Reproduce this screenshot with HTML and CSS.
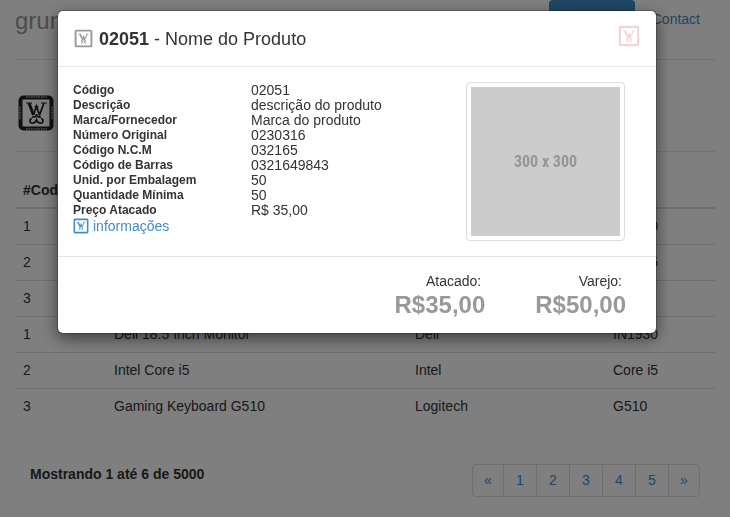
FILE: index.html
```html
<!DOCTYPE html>
<html lang="pt-BR">
<head>
<meta charset="utf-8">
<meta name="viewport" content="width=device-width, initial-scale=1">
<title>Nome do Produto</title>
<link rel="stylesheet" href="styles.css">
</head>
<body>
<svg class="sprite" aria-hidden="true">
  <symbol id="mark" viewBox="0 0 24 24">
    <rect x="2" y="2" width="20" height="20" rx="1" fill="none" stroke="currentColor" stroke-width="2.400"/>
    <path d="M5.500 6.500h3.500M15 6.500h3.500" fill="none" stroke="currentColor" stroke-width="1"/>
    <path d="M7.500 6.500l3.500 7" fill="none" stroke="currentColor" stroke-width="2.200"/>
    <path d="M11 13.500l1.200-5 1.300 5 3.200-7M12 13l-2.500 2 1.500 1.500-2 2M12 13l2.500 2-1.500 1.500 2 2" fill="none" stroke="currentColor" stroke-width="1.300"/>
  </symbol>
</svg>
<div class="page">
  <header class="top">
    <h3 class="brand">grunt-produtos</h3>
    <nav class="pills">
      <a href="#">Home</a>
      <a class="active" href="#">Produtos</a>
      <a href="#">Contact</a>
    </nav>
  </header>
  <div class="banner">
    <svg class="logo" viewBox="0 0 36 36" role="img" aria-label="Logo">
      <rect x="2.500" y="2.500" width="31" height="31" rx="3" fill="none" stroke="#222" stroke-width="4"/>
      <path d="M8 2h21M8 34h21M2 12v13M34 12v13" stroke="#fff" stroke-opacity=".55" stroke-width="1.600" stroke-dasharray="1.700 .8"/>
      <g fill="none" stroke="#222">
        <path d="M8 8h6M23 8h6M16.500 11.500h4" stroke-width="1.200"/>
        <path d="M11 8l4.500 12" stroke-width="3"/>
        <path d="M15.500 20l3-9 3 9 4.500-12" stroke-width="1.800"/>
        <path d="M18.500 19c0 2.500-1.500 3.500-4.500 3M18.500 19c0 2.500 1.500 3.500 4.500 3M14 23.500c-3 .5-2.500 5.500 1 4.500 2-.3 3-1.200 3.500-3 .5 1.800 1.500 2.700 3.500 3 3.500 1 4-4 1-4.500" stroke-width="1.700"/>
      </g>
    </svg>
  </div>
  <table class="products">
    <thead><tr><th class="c-code">#Codigo</th><th class="c-name">Produto</th><th class="c-brand">Marca</th><th>Ref.</th></tr></thead>
    <tbody>
      <tr><td>1</td><td>Dell 18.5 Inch Monitor</td><td>Dell</td><td>IN1930</td></tr>
      <tr><td>2</td><td>Intel Core i5</td><td>Intel</td><td>Core i5</td></tr>
      <tr><td>3</td><td>Gaming Keyboard G510</td><td>Logitech</td><td>G510</td></tr>
      <tr><td>1</td><td>Dell 18.5 Inch Monitor</td><td>Dell</td><td>IN1930</td></tr>
      <tr><td>2</td><td>Intel Core i5</td><td>Intel</td><td>Core i5</td></tr>
      <tr><td>3</td><td>Gaming Keyboard G510</td><td>Logitech</td><td>G510</td></tr>
    </tbody>
  </table>
  <div class="summary">
    <strong>Mostrando 1 até 6 de 5000</strong>
    <nav class="pagination" aria-label="Páginas">
      <a href="#">«</a><a href="#">1</a><a href="#">2</a><a href="#">3</a><a href="#">4</a><a href="#">5</a><a href="#">»</a>
    </nav>
  </div>
</div>

<div class="backdrop">
  <section class="modal" role="dialog" aria-labelledby="modal-title">
    <header class="modal-header">
      <svg class="title-icon" aria-hidden="true"><use href="#mark"/></svg>
      <h4 id="modal-title"><strong>02051</strong> - Nome do Produto</h4>
      <button class="close" type="button" aria-label="Fechar"><svg aria-hidden="true"><use href="#mark"/></svg></button>
    </header>
    <div class="modal-body">
      <div class="details">
        <dl>
          <dt>Código</dt><dd>02051</dd>
          <dt>Descrição</dt><dd>descrição do produto</dd>
          <dt>Marca/Fornecedor</dt><dd>Marca do produto</dd>
          <dt>Número Original</dt><dd>0230316</dd>
          <dt>Código N.C.M</dt><dd>032165</dd>
          <dt>Código de Barras</dt><dd>0321649843</dd>
          <dt>Unid. por Embalagem</dt><dd>50</dd>
          <dt>Quantidade Mínima</dt><dd>50</dd>
          <dt>Preço Atacado</dt><dd>R$ 35,00</dd>
        </dl>
        <a class="info" href="#"><svg aria-hidden="true"><use href="#mark"/></svg>informações</a>
      </div>
      <div class="thumbnail"><div class="placeholder">300 x 300</div></div>
    </div>
    <footer class="modal-footer">
      <div class="price"><span>Atacado:</span><strong>R$35,00</strong></div>
      <div class="price"><span>Varejo:</span><strong>R$50,00</strong></div>
    </footer>
  </section>
</div>
</body>
</html>
```
FILE: styles.css
```css
* { box-sizing: border-box; }

body {
  margin: 0;
  overflow: hidden;
  background: #fff;
  color: #333;
  font: 14px/20px "Liberation Sans", Arial, sans-serif;
}

a { color: #428bca; text-decoration: none; }
h3, h4, dl, dd { margin: 0; }
.sprite { display: none; }

.page { padding: 0 15px; }

.top {
  display: flex;
  justify-content: space-between;
  height: 60px;
  border-bottom: 1px solid #e5e5e5;
}
.brand { color: #999; font-size: 24px; font-weight: 400; line-height: 42px; }
.pills { display: flex; align-items: flex-start; gap: 2px; }
.pills a { padding: 9px 15px; border-radius: 4px; }
.pills .active { background: #428bca; color: #fff; }

.banner {
  display: flex;
  align-items: flex-end;
  height: 92px;
  padding: 0 3px 20px;
  border-bottom: 1px solid #e5e5e5;
}
.logo { width: 36px; height: 36px; }

.products {
  width: 100%;
  margin-top: 20px;
  border-collapse: collapse;
  table-layout: fixed;
}
.c-code { width: 91px; }
.c-name { width: 43%; }
.c-brand { width: 198px; }
th, td { height: 36px; padding: 8px; line-height: 19px; text-align: left; }
td { border-top: 1px solid #ddd; }
thead th { padding-bottom: 7px; border-bottom: 2px solid #ddd; }

.summary {
  display: flex;
  justify-content: space-between;
  align-items: flex-start;
  margin-top: 39px;
  padding: 0 15px;
}
.pagination { display: flex; border: 1px solid #ddd; border-radius: 4px; }
.pagination a { min-width: 33px; padding: 6px 0; line-height: 19px; text-align: center; }
.pagination a:first-child { min-width: 30px; }
.pagination a:last-child { min-width: 31px; }
.pagination a + a { border-left: 1px solid #ddd; }

.backdrop {
  position: fixed;
  inset: 0;
  padding: 10px 16px 10px 0;
  background: rgba(0, 0, 0, .5);
}

.modal {
  max-width: 600px;
  margin: 0 auto;
  border: 1px solid rgba(0, 0, 0, .2);
  border-radius: 6px;
  background: #fff;
  background-clip: padding-box;
  box-shadow: 0 5px 15px rgba(0, 0, 0, .5);
}

.modal-header {
  display: flex;
  align-items: center;
  gap: 6px;
  height: 56px;
  padding: 0 16px;
  border-bottom: 1px solid #e5e5e5;
}
.modal-header h4 { flex: 1; font-size: 18px; font-weight: 400; line-height: 24px; }
.title-icon { width: 19px; height: 19px; color: #999; }
.close { align-self: flex-start; margin-top: 14px; padding: 0; border: 0; background: none; color: #a00; opacity: .16; }
.close svg { display: block; width: 22px; height: 22px; }

.modal-body {
  display: flex;
  justify-content: space-between;
  padding: 15px 31px 15px 15px;
}
.details { padding-top: 1px; }
dl { display: grid; grid-template-columns: 178px auto; line-height: 15px; }
dt { font-size: 12px; font-weight: 700; }
.info { display: flex; align-items: center; gap: 4px; line-height: 16px; }
.info svg { width: 16px; height: 16px; }

.thumbnail { padding: 4px; border: 1px solid #ddd; border-radius: 4px; }
.placeholder {
  display: flex;
  align-items: center;
  justify-content: center;
  width: 149px;
  height: 149px;
  background: #ccc;
  color: #969696;
  font: 700 16px "Liberation Sans Narrow", "Roboto Condensed", Roboto, sans-serif;
}

.modal-footer {
  display: flex;
  justify-content: flex-end;
  gap: 50px;
  padding: 14px 30px 14px;
  border-top: 1px solid #e5e5e5;
}
.price { display: grid; text-align: right; }
.price span { padding-right: 4px; line-height: 20px; }
.price strong { color: #999; font-size: 24px; line-height: 28px; }
```
